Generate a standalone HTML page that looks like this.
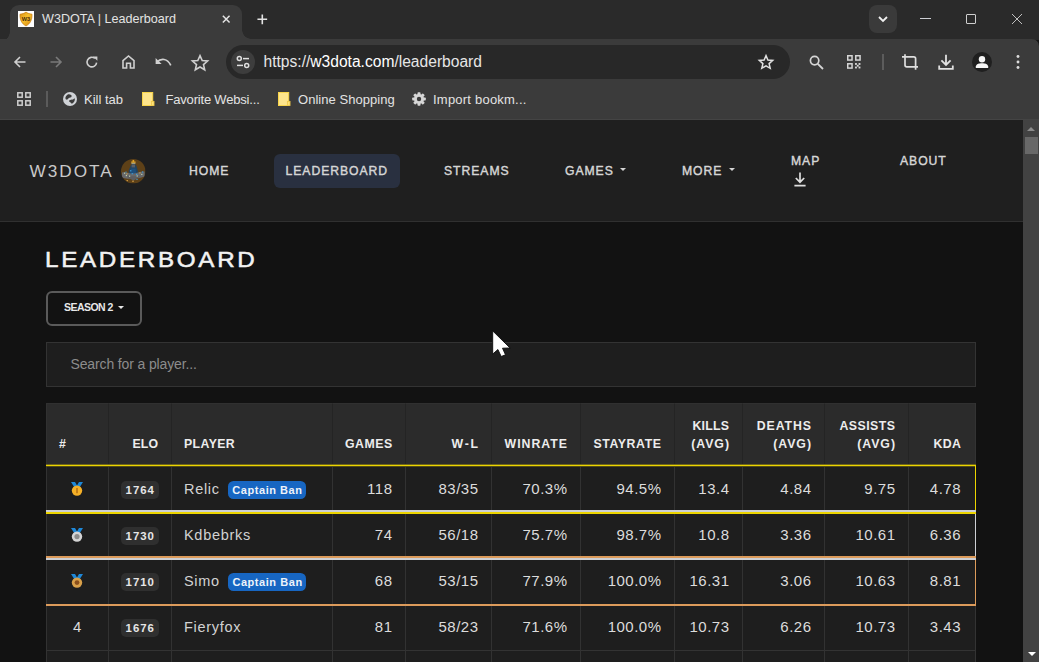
<!DOCTYPE html>
<html lang="en">
<head>
<meta charset="utf-8">
<title>W3DOTA | Leaderboard</title>
<style>
*{box-sizing:border-box;margin:0;padding:0}
html,body{width:1039px;height:662px;overflow:hidden;background:#131313}
body{position:relative;font-family:"Liberation Sans",sans-serif;color:#ddd}
.abs{position:absolute}
/* ---------- browser chrome ---------- */
#frame{left:0;top:0;width:1039px;height:40px;background:#2a2a2a}
#tab{left:10px;top:5px;width:232px;height:35px;background:#3b3b3b;border-radius:9px 9px 0 0}
#tab:before,#tab:after{content:"";position:absolute;bottom:1px;width:9px;height:9px;background:radial-gradient(circle at 0 0,rgba(0,0,0,0) 8.5px,#3b3b3b 9px)}
#tab:before{left:-9px;bottom:-1px}
#tab:after{right:-9px;transform:scaleX(-1)}
#toolbar{left:0;top:39px;width:1039px;height:81px;background:#3b3b3b;border-radius:0 7px 0 0}
#tbline{left:0;top:119px;width:1039px;height:1px;background:#444}
.ui{font-family:"Liberation Sans",sans-serif;font-size:12px;color:#e3e3e3;white-space:nowrap}
#omni{left:226px;top:45px;width:564px;height:34px;border-radius:17px;background:#282828}
#chip{left:231px;top:50px;width:24px;height:24px;border-radius:12px;background:#3d3d3d}
svg{position:absolute;overflow:visible}
/* ---------- page ---------- */
#content{left:0;top:120px;width:1023px;height:542px;background:#121212;overflow:hidden}
#content .abs{position:absolute}
#navbar{left:0;top:0;width:1023px;height:102px;background:#1f1f1f;border-bottom:1px solid #303030}
#navbar>*{margin-top:-120px}
.brand{left:29.5px;top:160.3px;font-size:17.2px;letter-spacing:2px;color:#c9c9c9;line-height:22px;white-space:nowrap}
.logo{left:121px;top:159px;width:24px;height:24px;border-radius:12px;background:radial-gradient(circle at 50% 55%,#3f7fb0 0,#2a5d86 22%,#4a4a3a 45%,#7a5a2e 62%,#5d4526 100%)}
.nav{font-size:12.2px;font-weight:400;color:#d6d6d6;line-height:16px;white-space:nowrap;letter-spacing:0.95px;-webkit-text-stroke:0.4px #d6d6d6}
.navpill{left:274px;top:154px;width:126px;height:33.5px;border-radius:6px;background:#293040}
.caret{width:0;height:0;border-left:3px solid transparent;border-right:3px solid transparent;border-top:3.5px solid #d4d4d4}
.title{left:45.2px;top:124.8px;font-size:22px;font-weight:400;letter-spacing:2.45px;transform:scaleX(1.1);transform-origin:0 0;color:#f2f2f2;line-height:30px;white-space:nowrap;-webkit-text-stroke:0.5px #f2f2f2}
.season{left:46px;top:171px;width:96px;height:35px;border:2px solid #5a5a5a;border-radius:6px;white-space:nowrap}
.season span{position:absolute;left:16px;top:7.8px;font-size:10.5px;font-weight:700;letter-spacing:-0.55px;color:#e8e8e8;line-height:13px}
.caret2{position:absolute;left:70px;top:13px;width:0;height:0;border-left:3px solid transparent;border-right:3px solid transparent;border-top:3.5px solid #e8e8e8}
.search{left:46px;top:222px;width:930px;height:45px;border:1px solid #333;background:#1e1e1e}
.search span{position:absolute;left:23.5px;top:11.6px;font-size:14px;letter-spacing:-0.13px;color:#8c8c8c;line-height:18px;white-space:nowrap}
table.lb{left:46px;top:283px;width:930px;table-layout:fixed;border-collapse:separate;border-spacing:0;border-right:1px solid #333}
.lb th,.lb td{border-left:1px solid #323232;text-align:right;white-space:nowrap;overflow:hidden}
.lb th{height:63px;background:#2b2b2b;vertical-align:bottom;padding:0 13px 12.2px 12px;font-size:12.3px;font-weight:700;line-height:18.5px;color:#ededed;letter-spacing:0;border-left-color:#242424}
.lb td{height:46px;background:#1e1e1e;vertical-align:top;padding:13px 12.5px 0 12px;font-size:15px;line-height:20px;color:#dcdcdc;letter-spacing:0.5px}
.lb .l{text-align:left}
.lb th:first-child{border-left-color:#313131}
.lb th{border-top:1px solid #303030}
.lb th:last-child,.lb td:last-child{padding-right:14px}
.lb td.l{font-size:14.5px;letter-spacing:0.7px;color:#d2d2d2}
.lb .c{text-align:center;padding-left:0;padding-right:0}
.lb tr.r4 td{height:47px;border-bottom:1px solid #333}
.elo{display:inline-block;height:18px;line-height:18px;padding:0 0 0 4.6px;width:38px;text-align:left;border-radius:5px;background:#2f2f2f;font-size:11.4px;font-weight:700;color:#e6e6e6;letter-spacing:0.95px;position:relative;top:0px;padding-top:0.5px;margin-right:0.5px}
.ban{display:inline-block;height:18px;line-height:19.6px;padding:0 0 0 4.6px;width:78px;overflow:hidden;border-radius:5.5px;background:#1766c2;font-size:11px;font-weight:700;color:#eef3fa;letter-spacing:0.55px;margin-left:8px;position:relative;top:0px;vertical-align:top;margin-top:2px}
.medal{position:relative;left:-0.75px;display:inline-block;vertical-align:top;margin-top:3px}
.hl{left:46px;width:930px}
</style>
</head>
<body>
<div id="frame" class="abs"></div>
<div class="abs" style="left:0;top:39px;width:10px;height:2px;background:#2a2a2a"></div>
<div id="tab" class="abs"></div>
<div id="toolbar" class="abs"></div>
<div id="tbline" class="abs"></div>
<div id="omni" class="abs"></div>
<div id="chip" class="abs"></div>
<!--CHROME-START-->
<!-- tab contents -->
<svg class="abs" style="left:18px;top:11px" width="16" height="16" viewBox="0 0 16 16"><defs><linearGradient id="fg" x1="0" y1="0" x2="1" y2="1"><stop offset="0" stop-color="#d98c12"/><stop offset="0.45" stop-color="#f6c02e"/><stop offset="1" stop-color="#d8860f"/></linearGradient></defs><rect width="16" height="16" fill="#fefefe"/><path d="M8 1.1 C9.8 2.4 11.8 3 14 3.2 C14.2 8.6 12.4 12.6 8 15 C3.6 12.6 1.8 8.6 2 3.2 C4.2 3 6.2 2.4 8 1.1 Z" fill="url(#fg)" stroke="#c77a10" stroke-width="0.7"/><text x="8" y="9.6" text-anchor="middle" font-family="Liberation Sans, sans-serif" font-size="5.6" font-weight="700" fill="#4a2a08">W3</text></svg>
<div class="abs ui" style="left:42px;top:12px;font-size:12.6px">W3DOTA | Leaderboard</div>
<svg class="abs" style="left:222px;top:15px" width="8.4" height="8.4" viewBox="0 0 10 10"><path d="M1 1 L9 9 M9 1 L1 9" stroke="#e3e3e3" stroke-width="1.8" fill="none"/></svg>
<svg class="abs" style="left:256.7px;top:13.7px" width="10.6" height="10.6" viewBox="0 0 12 12"><path d="M6 0.5 V11.5 M0.5 6 H11.5" stroke="#e3e3e3" stroke-width="1.8" fill="none"/></svg>
<!-- window controls -->
<div class="abs" style="left:869px;top:5px;width:28px;height:28px;border-radius:8px;background:#3a3a3a"></div>
<svg class="abs" style="left:878px;top:16px" width="10" height="6" viewBox="0 0 10 6"><path d="M1 1 L5 5 L9 1" stroke="#f0f0f0" stroke-width="1.8" fill="none"/></svg>
<div class="abs" style="left:920px;top:18px;width:11px;height:1px;background:#cdcfd4"></div>
<div class="abs" style="left:966px;top:14px;width:10px;height:10px;border:1px solid #cfcfcf;border-radius:1px"></div>
<svg class="abs" style="left:1012px;top:14px" width="10" height="10" viewBox="0 0 10 10"><path d="M0 0 L10 10 M10 0 L0 10" stroke="#c0c0c0" stroke-width="1" fill="none"/></svg>
<!-- toolbar nav icons -->
<svg class="abs" style="left:14px;top:56px" width="12" height="12" viewBox="0 0 12 12"><path d="M11.5 6 H1.5 M6 1 L1 6 L6 11" stroke="#d0d0d0" stroke-width="1.6" fill="none"/></svg>
<svg class="abs" style="left:50px;top:56px" width="12" height="12" viewBox="0 0 12 12"><path d="M0.5 6 H10.5 M6 1 L11 6 L6 11" stroke="#7a7a7a" stroke-width="1.6" fill="none"/></svg>
<svg class="abs" style="left:86px;top:56px" width="12" height="12" viewBox="0 0 12 12"><path d="M10.6 6.6 A4.8 4.8 0 1 1 8.9 2.4" stroke="#d0d0d0" stroke-width="1.6" fill="none"/><path d="M7 0.4 H11.4 V4.8 Z" fill="#d0d0d0"/></svg>
<svg class="abs" style="left:122px;top:55px" width="13" height="14" viewBox="0 0 13 14"><path d="M1 5.6 L6.5 1 L12 5.6 V13 H8.4 V8.2 H4.6 V13 H1 Z" stroke="#d0d0d0" stroke-width="1.6" fill="none" stroke-linejoin="miter"/></svg>
<svg class="abs" style="left:155px;top:57px" width="17" height="10" viewBox="0 0 17 10"><path d="M1.5 5.5 C6 0.8 12.5 1.2 15.8 8.4" stroke="#d0d0d0" stroke-width="1.7" fill="none"/><path d="M0.6 1 V7 H6.6 Z" fill="#d0d0d0"/></svg>
<svg class="abs" style="left:191px;top:54px" width="18" height="17" viewBox="0 0 18 17"><path d="M9 1.6 L11.2 6.5 L16.6 7 L12.5 10.6 L13.7 15.8 L9 13 L4.3 15.8 L5.5 10.6 L1.4 7 L6.8 6.5 Z" stroke="#d0d0d0" stroke-width="1.6" fill="none" stroke-linejoin="miter"/></svg>
<!-- omnibox -->
<svg class="abs" style="left:236px;top:55px" width="14" height="14" viewBox="0 0 14 14"><circle cx="3.3" cy="3.6" r="2" stroke="#e0e0e0" stroke-width="1.5" fill="none"/><path d="M7 3.6 H13" stroke="#e0e0e0" stroke-width="1.5"/><circle cx="10.7" cy="10.4" r="2" stroke="#e0e0e0" stroke-width="1.5" fill="none"/><path d="M1 10.4 H7" stroke="#e0e0e0" stroke-width="1.5"/></svg>
<div class="abs ui" style="left:263.5px;top:53.3px;font-size:15.6px;color:#fff"><span style="color:#e6e6e6">https://</span>w3dota.com<span style="color:#e6e6e6">/leaderboard</span></div>
<svg class="abs" style="left:758px;top:54px" width="16" height="16" viewBox="0 0 16 16"><path d="M8 1.6 L9.9 6 L14.7 6.4 L11.1 9.6 L12.2 14.3 L8 11.8 L3.8 14.3 L4.9 9.6 L1.3 6.4 L6.1 6 Z" stroke="#e0e0e0" stroke-width="1.5" fill="none"/></svg>
<!-- right icons -->
<svg class="abs" style="left:809px;top:55px" width="15" height="15" viewBox="0 0 15 15"><circle cx="5.6" cy="5.6" r="4.2" stroke="#d6d6d6" stroke-width="1.7" fill="none"/><path d="M8.8 8.8 L14 14" stroke="#d6d6d6" stroke-width="1.8"/></svg>
<svg class="abs" style="left:847px;top:55px" width="14" height="14" viewBox="0 0 15 15"><g stroke="#d6d6d6" stroke-width="1.6" fill="none"><rect x="0.8" y="0.8" width="4.6" height="4.6"/><rect x="9.4" y="0.8" width="4.6" height="4.6"/><rect x="0.8" y="9.4" width="4.6" height="4.6"/></g><g fill="#d6d6d6"><rect x="8.6" y="8.6" width="2" height="2"/><rect x="12.4" y="8.6" width="2" height="2"/><rect x="10.5" y="10.5" width="2" height="2"/><rect x="8.6" y="12.4" width="2" height="2"/><rect x="12.4" y="12.4" width="2" height="2"/></g></svg>
<div class="abs" style="left:882px;top:54px;width:2px;height:16px;background:#5c5c5c"></div>
<svg class="abs" style="left:901px;top:54px" width="18" height="17" viewBox="0 0 18 17"><path d="M1 2.8 H12.8 Q14.6 2.8 14.6 4.6 V15.8 M4 0.2 V11 Q4 12.8 5.8 12.8 H17" stroke="#dedede" stroke-width="1.7" fill="none"/></svg>
<svg class="abs" style="left:938px;top:54px" width="16" height="16" viewBox="0 0 16 16"><path d="M8 0.8 V10.6 M3.4 6.4 L8 11 L12.6 6.4 M1.2 11.6 V14.8 H14.8 V11.6" stroke="#e0e0e0" stroke-width="1.8" fill="none"/></svg>
<svg class="abs" style="left:972px;top:52px" width="20" height="20" viewBox="0 0 20 20"><circle cx="10" cy="10" r="10" fill="#1f1f1f"/><circle cx="10" cy="7.3" r="3.2" fill="#f6f6f6"/><path d="M3.8 16 V14.6 C4.2 12 7 11.3 10 11.3 C13 11.3 15.8 12 16.2 14.6 V16 Z" fill="#f6f6f6"/></svg>
<svg class="abs" style="left:1016px;top:54px" width="4" height="16" viewBox="0 0 4 16"><circle cx="2" cy="2.5" r="1.45" fill="#dcdcdc"/><circle cx="2" cy="8" r="1.45" fill="#dcdcdc"/><circle cx="2" cy="13.5" r="1.45" fill="#dcdcdc"/></svg>
<!-- bookmarks bar -->
<svg class="abs" style="left:17px;top:92px" width="14" height="14" viewBox="0 0 14 14"><g stroke="#cfcfcf" stroke-width="1.5" fill="none"><rect x="0.8" y="0.8" width="4.4" height="4.4"/><rect x="8.8" y="0.8" width="4.4" height="4.4"/><rect x="0.8" y="8.8" width="4.4" height="4.4"/><rect x="8.8" y="8.8" width="4.4" height="4.4"/></g></svg>
<div class="abs" style="left:46px;top:91px;width:2px;height:16px;background:#5b5b5b"></div>
<svg class="abs" style="left:63px;top:92px" width="14" height="14" viewBox="0 0 14 14"><circle cx="7" cy="7" r="7" fill="#cfd2d6"/><path d="M5.2 2.2 C7.4 2 9 3 8.6 4.4 C8.2 5.6 6.6 5.4 5.6 6.2 C4.8 6.8 4.6 7.8 3.4 7.6 C2.4 7.4 2.2 6 2.6 5 C3 3.8 4 2.8 5.2 2.2 Z M6.2 8.6 C7.4 7.6 8.8 8.2 9.8 7.6 C10.6 7.2 11 6.4 11.8 6.6 C12.2 8.6 11 10.8 9 11.8 C8 11.6 8.2 10.6 7.2 10.2 C6.4 9.8 5.6 9.4 6.2 8.6 Z" fill="#3b3b3b"/></svg>
<div class="abs ui" style="left:84px;top:91.5px;font-size:13px">Kill tab</div>
<svg class="abs" style="left:142px;top:92px" width="13" height="14" viewBox="0 0 13 14"><rect x="0.5" y="0.5" width="10.2" height="13" fill="#fee58c" stroke="#f9d54a" stroke-width="1"/><rect x="9.4" y="9.4" width="2.6" height="4.1" fill="#fbe07a" stroke="#efc94a" stroke-width="0.9"/></svg>
<div class="abs ui" style="left:165.5px;top:91.5px;font-size:13px;letter-spacing:-0.19px">Favorite Websi...</div>
<svg class="abs" style="left:278px;top:92px" width="13" height="14" viewBox="0 0 13 14"><rect x="0.5" y="0.5" width="10.2" height="13" fill="#fee58c" stroke="#f9d54a" stroke-width="1"/><rect x="9.4" y="9.4" width="2.6" height="4.1" fill="#fbe07a" stroke="#efc94a" stroke-width="0.9"/></svg>
<div class="abs ui" style="left:298px;top:91.5px;font-size:13px;letter-spacing:0.04px">Online Shopping</div>
<svg class="abs" style="left:412px;top:92px" width="14" height="14" viewBox="0 0 14 14"><g fill="#d6d6d6"><circle cx="7" cy="7" r="5"/><rect x="5.5" y="0.2" width="3" height="13.6" rx="0.7"/><rect x="5.5" y="0.2" width="3" height="13.6" rx="0.7" transform="rotate(45 7 7)"/><rect x="5.5" y="0.2" width="3" height="13.6" rx="0.7" transform="rotate(90 7 7)"/><rect x="5.5" y="0.2" width="3" height="13.6" rx="0.7" transform="rotate(135 7 7)"/></g><circle cx="7" cy="7" r="2.2" fill="#3b3b3b"/></svg>
<div class="abs ui" style="left:433px;top:91.5px;font-size:13px;letter-spacing:0.22px">Import bookm...</div>
<!--CHROME-END-->
<!--PAGE-START-->
<div id="content" class="abs">
 <div id="navbar" class="abs">
  <div class="abs brand">W3DOTA</div>
  <svg class="abs" style="left:120.7px;top:158.5px" width="24.5" height="24.5" viewBox="0 0 24.5 24.5"><defs><clipPath id="lc"><circle cx="12.25" cy="12.25" r="12.25"/></clipPath></defs><g clip-path="url(#lc)"><rect width="24.5" height="24.5" fill="#5e4118"/><path d="M12.4 3.5 L15.5 7 L17 12.5 L16 16 L8.5 16 L7.5 12 L9.5 7 Z" fill="#23435f"/><path d="M10 9.5 L14.5 9.5 L15.5 15 L9 15 Z" fill="#1d4f7c"/><rect x="10.6" y="5.4" width="3.4" height="3" fill="#5b6066"/><path d="M1 13.6 C5 12.4 8.5 14.6 12.2 14.6 C16 14.6 19.5 11.6 23.6 12.6 L23.6 17.6 C19 19.4 15.5 19.8 12.2 19.8 C8.5 19.8 4.5 19.8 1 18.4 Z" fill="#67686a"/><path d="M5 17.2 L19.5 17.2 L12.4 21.8 Z" fill="#5d5e60"/><path d="M11.5 1 H13.2 V2.6 H14.6 V3.8 H10.2 V2.6 H11.5 Z" fill="#e0a426"/><rect x="10.4" y="3.8" width="4" height="0.9" fill="#cfc79a"/><g fill="#bccfb0"><rect x="3" y="13.6" width="1.2" height="1.2"/><rect x="4.8" y="16" width="1.2" height="1.2"/><rect x="20.2" y="14.8" width="1.2" height="1.2"/><rect x="15.6" y="16.4" width="1.2" height="1.2"/><rect x="8" y="16.6" width="1.2" height="1.2"/></g><g fill="#3d9bd8"><rect x="9" y="11.2" width="1.4" height="1.2"/><rect x="10.6" y="14.2" width="1.6" height="1.1"/><rect x="15" y="14.8" width="1.4" height="1.2"/><rect x="21" y="12.4" width="1.2" height="1.2"/><rect x="4.4" y="12.6" width="1.2" height="1"/><rect x="15.4" y="20" width="1.2" height="1"/></g><g fill="#e0a84a"><rect x="5.4" y="14.4" width="1.2" height="1.1"/><rect x="18.4" y="13.4" width="1.2" height="1.1"/><rect x="11.4" y="21.6" width="1.2" height="1.4"/><rect x="5.6" y="21" width="1.2" height="1.2"/></g></g></svg>
  <div class="abs nav" style="left:189px;top:163px">HOME</div>
  <div class="abs navpill"></div>
  <div class="abs nav" style="left:285.5px;top:163px">LEADERBOARD</div>
  <div class="abs nav" style="left:444px;top:163px">STREAMS</div>
  <div class="abs nav" style="left:565px;top:163px">GAMES</div>
  <div class="abs caret" style="left:620px;top:168px"></div>
  <div class="abs nav" style="left:682px;top:163px">MORE</div>
  <div class="abs caret" style="left:729px;top:168px"></div>
  <div class="abs nav" style="left:791px;top:153px">MAP</div>
  <svg class="abs" style="left:794px;top:172px" width="12" height="15" viewBox="0 0 12 15"><path d="M6 0.5 V10 M1.8 6 L6 10.2 L10.2 6 M0.4 13.6 H11.6" stroke="#dedede" stroke-width="1.7" fill="none"/></svg>
  <div class="abs nav" style="left:900px;top:153px">ABOUT</div>
 </div>
 <h1 class="abs title">LEADERBOARD</h1>
 <div class="abs season"><span>SEASON 2</span><i class="caret2"></i></div>
 <div class="abs search"><span>Search for a player...</span></div>
<!--TABLE-START-->
 <table class="abs lb" cellspacing="0" cellpadding="0">
  <colgroup><col style="width:62px"><col style="width:63px"><col style="width:161px"><col style="width:73px"><col style="width:86px"><col style="width:89px"><col style="width:94px"><col style="width:68px"><col style="width:82px"><col style="width:84px"><col style="width:67px"></colgroup>
  <thead>
   <tr><th class="l">#</th><th><span style="letter-spacing:0.1px;margin-right:-0.1px">ELO</span></th><th class="l"><span style="letter-spacing:0.4px;margin-right:-0.4px">PLAYER</span></th><th><span style="letter-spacing:0.5px;margin-right:-0.5px">GAMES</span></th><th><span style="letter-spacing:1.7px;margin-right:-1.7px">W-L</span></th><th><span style="letter-spacing:1.0px;margin-right:-1.0px">WINRATE</span></th><th><span style="letter-spacing:0.6px;margin-right:-0.6px">STAYRATE</span></th><th><span style="letter-spacing:0.25px;margin-right:-0.25px">KILLS</span><br><span style="letter-spacing:0.95px;margin-right:-0.95px">(AVG)</span></th><th><span style="letter-spacing:0.9px;margin-right:-0.9px">DEATHS</span><br><span style="letter-spacing:0.95px;margin-right:-0.95px">(AVG)</span></th><th><span style="letter-spacing:0.5px;margin-right:-0.5px">ASSISTS</span><br><span style="letter-spacing:0.95px;margin-right:-0.95px">(AVG)</span></th><th><span style="letter-spacing:0.45px;margin-right:-0.45px">KDA</span></th></tr>
  </thead>
  <tbody>
   <tr class="r1"><td class="c"><svg class="medal" width="12" height="14" viewBox="0 0 12 14"><path d="M0 0 H4 L6 3.4 L8 0 H12 L8.2 6 H3.8 Z" fill="#1e88d8"/><circle cx="6" cy="8.6" r="5.2" fill="#f5b027"/><rect x="5.3" y="6" width="1.4" height="5.2" fill="#b06a12"/></svg></td><td><b class="elo">1764</b></td><td class="l">Relic<b class="ban">Captain Ban</b></td><td>118</td><td>83/35</td><td>70.3%</td><td>94.5%</td><td>13.4</td><td>4.84</td><td>9.75</td><td>4.78</td></tr>
   <tr class="r2"><td class="c"><svg class="medal" width="12" height="14" viewBox="0 0 12 14"><path d="M0 0 H4 L6 3.4 L8 0 H12 L8.2 6 H3.8 Z" fill="#1e88d8"/><circle cx="6" cy="8.6" r="5.2" fill="#d4d4d4"/><circle cx="6" cy="8.6" r="2.6" fill="#8c8c8c"/></svg></td><td><b class="elo">1730</b></td><td class="l">Kdbebrks</td><td>74</td><td>56/18</td><td>75.7%</td><td>98.7%</td><td>10.8</td><td>3.36</td><td>10.61</td><td>6.36</td></tr>
   <tr class="r3"><td class="c"><svg class="medal" width="12" height="14" viewBox="0 0 12 14"><path d="M0 0 H4 L6 3.4 L8 0 H12 L8.2 6 H3.8 Z" fill="#1e88d8"/><circle cx="6" cy="8.6" r="5.2" fill="#d9a04a"/><circle cx="6" cy="8.6" r="2.4" fill="#8a4f1c"/></svg></td><td><b class="elo">1710</b></td><td class="l">Simo<b class="ban">Captain Ban</b></td><td>68</td><td>53/15</td><td>77.9%</td><td>100.0%</td><td>16.31</td><td>3.06</td><td>10.63</td><td>8.81</td></tr>
   <tr class="r4"><td class="c">4</td><td><b class="elo">1676</b></td><td class="l">Fieryfox</td><td>81</td><td>58/23</td><td>71.6%</td><td>100.0%</td><td>10.73</td><td>6.26</td><td>10.73</td><td>3.43</td></tr>
   <tr class="r5"><td class="c">&nbsp;</td><td></td><td class="l">&nbsp;</td><td></td><td></td><td></td><td></td><td></td><td></td><td></td><td></td></tr>
  </tbody>
 </table>
 <!-- podium row outlines -->
 <div class="abs hl" style="top:344px;height:3px;background:linear-gradient(#6f661c 0,#6f661c 1px,#ecd400 1px,#ecd400 2px,#524c17 2px,#524c17 3px)"></div>
 <div class="abs hl" style="top:390px;height:2px;background:#cdcfd4"></div>
 <div class="abs hl" style="top:392px;height:2px;background:#ecd400"></div>
 <div class="abs hl" style="top:436px;height:2px;background:#dc9b5b"></div>
 <div class="abs hl" style="top:438px;height:2px;background:#cdcfd4"></div>
 <div class="abs hl" style="top:484px;height:2px;background:#dc9b5b"></div>
 <div class="abs" style="left:975px;top:346px;width:1px;height:44px;background:#ecd400"></div>
 <div class="abs" style="left:975px;top:394px;width:1px;height:42px;background:#cdcfd4"></div>
 <div class="abs" style="left:975px;top:440px;width:1px;height:44px;background:#dc9b5b"></div>
<!--TABLE-END-->
</div>
<!-- scrollbar -->
<div class="abs" style="left:1023px;top:120px;width:16px;height:542px;background:#424242"></div>
<div class="abs" style="left:1025px;top:137px;width:13px;height:17px;background:#686868"></div>
<div class="abs" style="left:1027px;top:126.8px;width:0;height:0;border-left:4px solid transparent;border-right:4px solid transparent;border-bottom:4.5px solid #8c8c8c"></div>
<div class="abs" style="left:1027.5px;top:651.5px;width:0;height:0;border-left:4px solid transparent;border-right:4px solid transparent;border-top:4.5px solid #ffffff"></div>
<!-- cursor -->
<svg class="abs" style="left:0;top:0" width="1039" height="662" viewBox="0 0 1039 662"><path d="M492.7 330.9 L492.7 354.1 L497.9 349.5 L501.2 356.5 L505.5 354.8 L502.5 348.2 L510.1 348 Z" fill="#fff" stroke="#0c0c0c" stroke-width="0.9" stroke-linejoin="round"/></svg>
<!--PAGE-END-->
</body>
</html>
